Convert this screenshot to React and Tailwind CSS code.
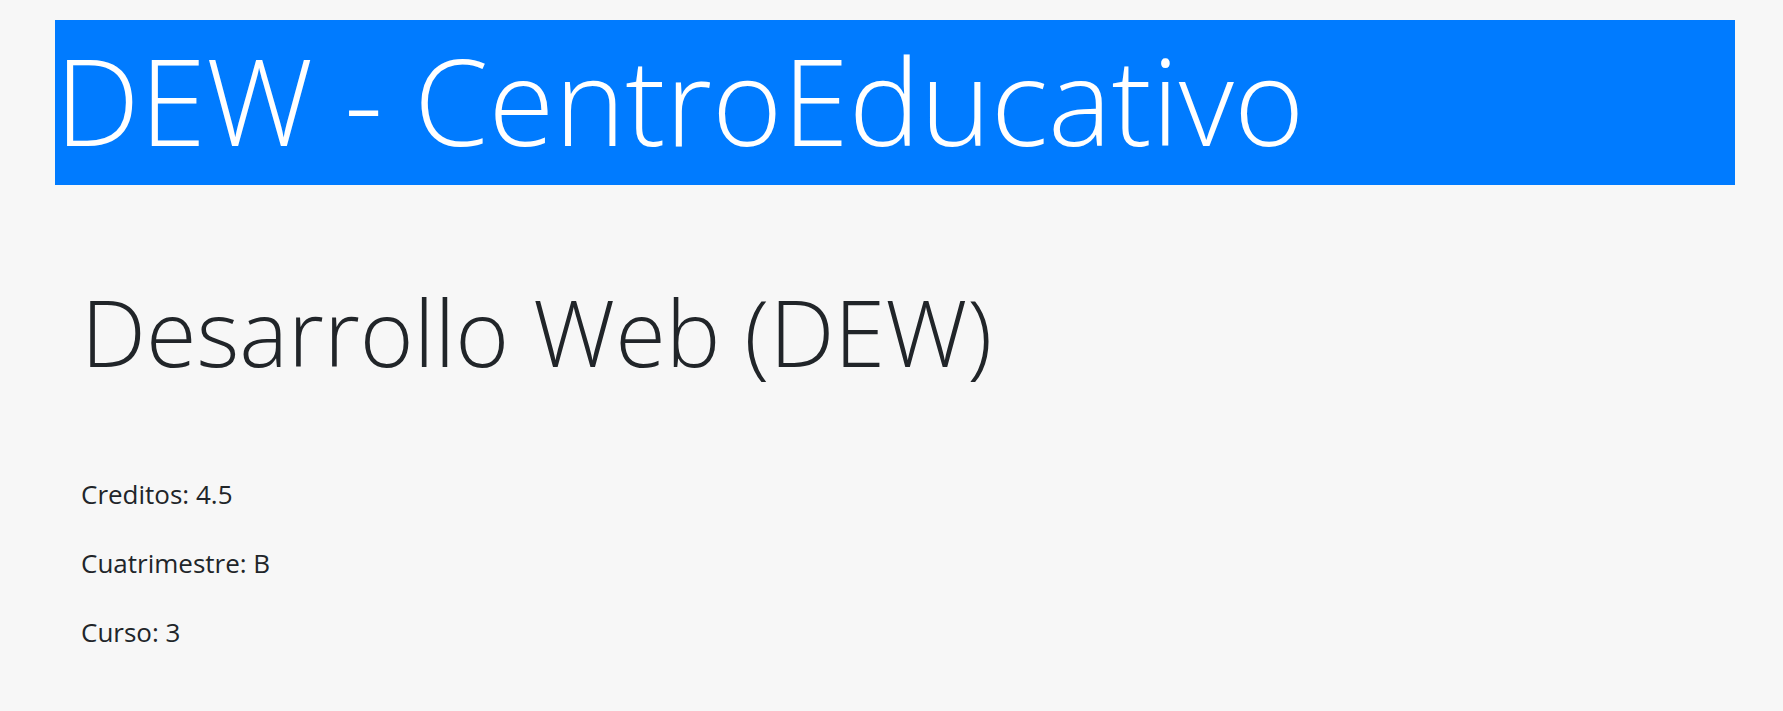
import React from "react";

export default function App() {
  return (
    <div className="min-h-[711px] bg-[#f7f7f7] pt-[20px] font-['Open_Sans',sans-serif] text-[#212529]">
      <header className="ml-[55px] h-[165px] w-[1680px] bg-[#007bff] pt-[8px]">
        <h1 className="whitespace-nowrap text-[120px] font-light leading-[1.2] text-white">
          DEW - CentroEducativo
        </h1>
      </header>
      <main className="pl-[81px] pt-[92px]">
        <h2 className="whitespace-nowrap text-[92px] font-light leading-[1.2]">
          Desarrollo Web (DEW)
        </h2>
        <div className="mt-[87px] flex flex-col gap-[29px]">
          <p className="text-[26px] leading-[40px]">Creditos: 4.5</p>
          <p className="text-[26px] leading-[40px]">Cuatrimestre: B</p>
          <p className="text-[26px] leading-[40px]">Curso: 3</p>
        </div>
      </main>
    </div>
  );
}
